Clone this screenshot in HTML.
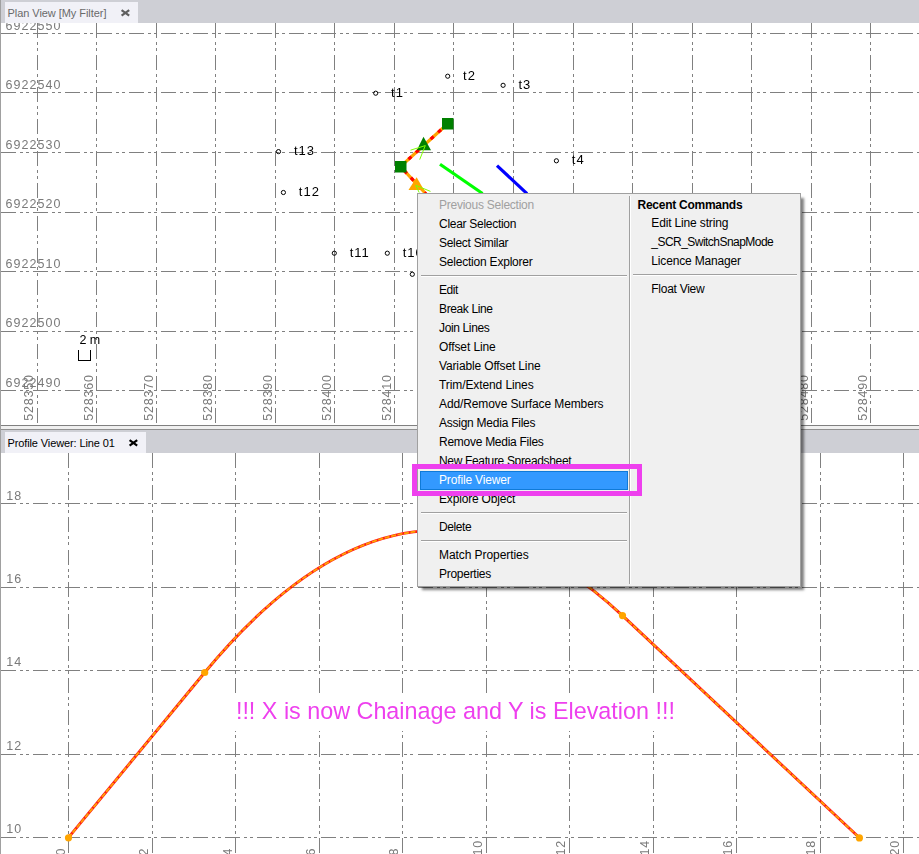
<!DOCTYPE html>
<html><head><meta charset="utf-8"><title>Profile Viewer</title>
<style>
html,body{margin:0;padding:0;background:#fff;}
body{width:919px;height:854px;overflow:hidden;position:relative;font-family:"Liberation Sans",sans-serif;}
.abs{position:absolute;}
.tabbar{position:absolute;left:0;width:919px;background:#cecfd5;}
.tab{position:absolute;left:5px;top:2px;height:21px;background:#f1f1f7;font-size:11px;line-height:21px;white-space:pre;}
.tab span.t{position:absolute;left:2.5px;top:0.5px;}
svg{position:absolute;left:0;top:0;}
svg text{font-family:"Liberation Sans",sans-serif;}
.menu{position:absolute;left:417px;top:193px;width:382px;height:392px;background:#f0f0f0;border:1px solid #a0a0a0;font-size:12px;color:#000;}
.mi{position:absolute;height:19px;line-height:19px;white-space:pre;margin-top:1px;}
.sep{position:absolute;height:1px;background:#a0a0a0;border-bottom:1px solid #fff;}
</style></head><body>
<svg width="919" height="854" viewBox="0 0 919 854" style="will-change:transform">
<defs><clipPath id="cp"><rect x="1" y="23" width="918" height="402"/></clipPath><clipPath id="cv"><rect x="1" y="453" width="918" height="401"/></clipPath></defs>
<g clip-path="url(#cp)">
<g stroke="#808080" stroke-width="1" stroke-dasharray="15 4 3 3 3 4.04" fill="none" shape-rendering="crispEdges">
<path d="M37.5 23V425" stroke-dasharray="15 4 3 3 3 4.09"/>
<path d="M96.5 23V425" stroke-dasharray="15 4 3 3 3 4.09"/>
<path d="M156.5 23V425" stroke-dasharray="15 4 3 3 3 4.09"/>
<path d="M215.5 23V425" stroke-dasharray="15 4 3 3 3 4.09"/>
<path d="M275.5 23V425" stroke-dasharray="15 4 3 3 3 4.09"/>
<path d="M334.5 23V425" stroke-dasharray="15 4 3 3 3 4.09"/>
<path d="M394.5 23V425" stroke-dasharray="15 4 3 3 3 4.09"/>
<path d="M453.5 23V425" stroke-dasharray="15 4 3 3 3 4.09"/>
<path d="M513.5 23V425" stroke-dasharray="15 4 3 3 3 4.09"/>
<path d="M573.5 23V425" stroke-dasharray="15 4 3 3 3 4.09"/>
<path d="M632.5 23V425" stroke-dasharray="15 4 3 3 3 4.09"/>
<path d="M692.5 23V425" stroke-dasharray="15 4 3 3 3 4.09"/>
<path d="M751.5 23V425" stroke-dasharray="15 4 3 3 3 4.09"/>
<path d="M811.5 23V425" stroke-dasharray="15 4 3 3 3 4.09"/>
<path d="M870.5 23V425" stroke-dasharray="15 4 3 3 3 4.09"/>
<path d="M1 33.5H919"/>
<path d="M1 92.5H919"/>
<path d="M1 152.5H919"/>
<path d="M1 212.5H919"/>
<path d="M1 271.5H919"/>
<path d="M1 331.5H919"/>
<path d="M1 390.5H919"/>
</g>
<text x="5.6" y="29.6" font-size="12.5" letter-spacing="1.02" fill="#7a7a7a">6922550</text>
<text x="5.6" y="89.2" font-size="12.5" letter-spacing="1.02" fill="#7a7a7a">6922540</text>
<text x="5.6" y="148.7" font-size="12.5" letter-spacing="1.02" fill="#7a7a7a">6922530</text>
<text x="5.6" y="208.2" font-size="12.5" letter-spacing="1.02" fill="#7a7a7a">6922520</text>
<text x="5.6" y="267.8" font-size="12.5" letter-spacing="1.02" fill="#7a7a7a">6922510</text>
<text x="5.6" y="327.4" font-size="12.5" letter-spacing="1.02" fill="#7a7a7a">6922500</text>
<text x="5.6" y="386.9" font-size="12.5" letter-spacing="1.02" fill="#7a7a7a">6922490</text>
<text transform="translate(33.4,420.8) rotate(-90)" font-size="12.5" letter-spacing="0.80" fill="#7a7a7a">528350</text>
<text transform="translate(92.9,420.8) rotate(-90)" font-size="12.5" letter-spacing="0.80" fill="#7a7a7a">528360</text>
<text transform="translate(152.5,420.8) rotate(-90)" font-size="12.5" letter-spacing="0.80" fill="#7a7a7a">528370</text>
<text transform="translate(212.0,420.8) rotate(-90)" font-size="12.5" letter-spacing="0.80" fill="#7a7a7a">528380</text>
<text transform="translate(271.6,420.8) rotate(-90)" font-size="12.5" letter-spacing="0.80" fill="#7a7a7a">528390</text>
<text transform="translate(331.1,420.8) rotate(-90)" font-size="12.5" letter-spacing="0.80" fill="#7a7a7a">528400</text>
<text transform="translate(390.7,420.8) rotate(-90)" font-size="12.5" letter-spacing="0.80" fill="#7a7a7a">528410</text>
<text transform="translate(450.2,420.8) rotate(-90)" font-size="12.5" letter-spacing="0.80" fill="#7a7a7a">528420</text>
<text transform="translate(509.8,420.8) rotate(-90)" font-size="12.5" letter-spacing="0.80" fill="#7a7a7a">528430</text>
<text transform="translate(569.3,420.8) rotate(-90)" font-size="12.5" letter-spacing="0.80" fill="#7a7a7a">528440</text>
<text transform="translate(628.9,420.8) rotate(-90)" font-size="12.5" letter-spacing="0.80" fill="#7a7a7a">528450</text>
<text transform="translate(688.4,420.8) rotate(-90)" font-size="12.5" letter-spacing="0.80" fill="#7a7a7a">528460</text>
<text transform="translate(748.0,420.8) rotate(-90)" font-size="12.5" letter-spacing="0.80" fill="#7a7a7a">528470</text>
<text transform="translate(807.5,420.8) rotate(-90)" font-size="12.5" letter-spacing="0.80" fill="#7a7a7a">528480</text>
<text transform="translate(867.1,420.8) rotate(-90)" font-size="12.5" letter-spacing="0.80" fill="#7a7a7a">528490</text>
<text x="79.6" y="344.2" font-size="12.5" letter-spacing="-0.12" fill="#000">2 m</text>
<path d="M78.5 350V360.5H90.5V350" stroke="#000" stroke-width="1" fill="none" shape-rendering="crispEdges"/>
<circle cx="447.7" cy="76.2" r="2.1" stroke="#000" stroke-width="1" fill="none"/>
<text x="463.1" y="79.7" font-size="13" letter-spacing="1" fill="#000">t2</text>
<circle cx="503.1" cy="85.3" r="2.1" stroke="#000" stroke-width="1" fill="none"/>
<text x="518.5" y="88.8" font-size="13" letter-spacing="1" fill="#000">t3</text>
<circle cx="375.7" cy="93.2" r="2.1" stroke="#000" stroke-width="1" fill="none"/>
<text x="391.1" y="96.7" font-size="13" letter-spacing="1" fill="#000">t1</text>
<circle cx="556.4" cy="160.8" r="2.1" stroke="#000" stroke-width="1" fill="none"/>
<text x="571.8" y="164.3" font-size="13" letter-spacing="1" fill="#000">t4</text>
<circle cx="278.5" cy="151.6" r="2.1" stroke="#000" stroke-width="1" fill="none"/>
<text x="293.9" y="155.1" font-size="13" letter-spacing="1" fill="#000">t13</text>
<circle cx="283.4" cy="192.5" r="2.1" stroke="#000" stroke-width="1" fill="none"/>
<text x="298.8" y="196.0" font-size="13" letter-spacing="1" fill="#000">t12</text>
<circle cx="334.3" cy="253.2" r="2.1" stroke="#000" stroke-width="1" fill="none"/>
<text x="349.7" y="256.7" font-size="13" letter-spacing="1" fill="#000">t11</text>
<circle cx="387.3" cy="253.2" r="2.1" stroke="#000" stroke-width="1" fill="none"/>
<text x="402.7" y="256.7" font-size="13" letter-spacing="1" fill="#000">t10</text>
<circle cx="412.3" cy="274.3" r="2.1" stroke="#000" stroke-width="1" fill="none"/>
<text x="427.7" y="277.8" font-size="13" letter-spacing="1" fill="#000">t9</text>
<g fill="none" stroke-linecap="butt">
<path d="M447.7 123.7L400.5 166.5L426 194" stroke="#ffa500" stroke-width="3.2"/>
<path d="M447.7 123.7L400.5 166.5L426 194" stroke="#ff0000" stroke-width="3.2" stroke-dasharray="4 6" stroke-dashoffset="-9"/>
<path d="M440 164.2L482.5 193.5" stroke="#00ff00" stroke-width="3.2"/>
<path d="M497 165.6L527 193.6" stroke="#0000ff" stroke-width="3.2"/>
</g>
<rect x="442" y="118" width="11.5" height="11.5" fill="#008000"/>
<rect x="395" y="161" width="11.5" height="11.5" fill="#008000"/>
<path d="M423.5 136.8L431 150.2H416.8Z" fill="#008000"/>
<path d="M416.6 177.3L424 190H408.5Z" fill="#ffa500"/>
<path d="M410.5 150.2L425.3 145.6L419.7 159.6" stroke="#7fff00" stroke-width="1" fill="none"/>
<path d="M419.2 192.5L415.7 185.3L430.5 191.4" stroke="#7fff00" stroke-width="1" fill="none"/>
</g>
<g clip-path="url(#cv)">
<g stroke="#808080" stroke-width="1" stroke-dasharray="15 4 3 3 3 4.04" fill="none" shape-rendering="crispEdges">
<path d="M68.5 453.3V860" stroke-dasharray="15 4 3 3 3 4.07"/>
<path d="M152.5 453.3V860" stroke-dasharray="15 4 3 3 3 4.07"/>
<path d="M235.5 453.3V860" stroke-dasharray="15 4 3 3 3 4.07"/>
<path d="M319.5 453.3V860" stroke-dasharray="15 4 3 3 3 4.07"/>
<path d="M402.5 453.3V860" stroke-dasharray="15 4 3 3 3 4.07"/>
<path d="M486.5 453.3V860" stroke-dasharray="15 4 3 3 3 4.07"/>
<path d="M569.5 453.3V860" stroke-dasharray="15 4 3 3 3 4.07"/>
<path d="M653.5 453.3V860" stroke-dasharray="15 4 3 3 3 4.07"/>
<path d="M736.5 453.3V860" stroke-dasharray="15 4 3 3 3 4.07"/>
<path d="M820.5 453.3V860" stroke-dasharray="15 4 3 3 3 4.07"/>
<path d="M903.5 453.3V860" stroke-dasharray="15 4 3 3 3 4.07"/>
<path d="M1 503.5H919"/>
<path d="M1 587.5H919"/>
<path d="M1 670.5H919"/>
<path d="M1 754.5H919"/>
<path d="M1 837.5H919"/>
</g>
<text x="6.3" y="499.6" font-size="12.5" letter-spacing="1.02" fill="#7a7a7a">18</text>
<text x="6.3" y="582.9" font-size="12.5" letter-spacing="1.02" fill="#7a7a7a">16</text>
<text x="6.3" y="666.2" font-size="12.5" letter-spacing="1.02" fill="#7a7a7a">14</text>
<text x="6.3" y="749.5" font-size="12.5" letter-spacing="1.02" fill="#7a7a7a">12</text>
<text x="6.3" y="832.8" font-size="12.5" letter-spacing="1.02" fill="#7a7a7a">10</text>
<text transform="translate(64.8,855.5) rotate(-90)" font-size="12.5" letter-spacing="0.80" fill="#7a7a7a">0</text>
<text transform="translate(148.2,855.5) rotate(-90)" font-size="12.5" letter-spacing="0.80" fill="#7a7a7a">2</text>
<text transform="translate(231.6,855.5) rotate(-90)" font-size="12.5" letter-spacing="0.80" fill="#7a7a7a">4</text>
<text transform="translate(315.0,855.5) rotate(-90)" font-size="12.5" letter-spacing="0.80" fill="#7a7a7a">6</text>
<text transform="translate(398.4,855.5) rotate(-90)" font-size="12.5" letter-spacing="0.80" fill="#7a7a7a">8</text>
<text transform="translate(481.8,855.5) rotate(-90)" font-size="12.5" letter-spacing="0.80" fill="#7a7a7a">10</text>
<text transform="translate(565.2,855.5) rotate(-90)" font-size="12.5" letter-spacing="0.80" fill="#7a7a7a">12</text>
<text transform="translate(648.6,855.5) rotate(-90)" font-size="12.5" letter-spacing="0.80" fill="#7a7a7a">14</text>
<text transform="translate(732.0,855.5) rotate(-90)" font-size="12.5" letter-spacing="0.80" fill="#7a7a7a">16</text>
<text transform="translate(815.4,855.5) rotate(-90)" font-size="12.5" letter-spacing="0.80" fill="#7a7a7a">18</text>
<text transform="translate(898.8,855.5) rotate(-90)" font-size="12.5" letter-spacing="0.80" fill="#7a7a7a">20</text>
<path d="M68.4 837.7L204.7 672.5C343.97 504.0 483.23 485.0 622.5 615.6L859.4 837.8" stroke="#ff0000" stroke-width="2.9" stroke-opacity="0.9" fill="none"/>
<path d="M68.4 837.7L204.7 672.5C343.97 504.0 483.23 485.0 622.5 615.6L859.4 837.8" stroke="#ffa500" stroke-width="1.7" stroke-dasharray="5 1.6" fill="none"/>
<circle cx="68.5" cy="837.8" r="3.6" fill="#ffa500"/>
<circle cx="204.7" cy="672.5" r="3.6" fill="#ffa500"/>
<circle cx="622.5" cy="615.6" r="3.6" fill="#ffa500"/>
<circle cx="859.4" cy="837.9" r="3.6" fill="#ffa500"/>
<rect x="232" y="693.5" width="449" height="37.5" fill="#fff"/>
<text x="235.9" y="719.1" font-size="24.5" textLength="439" lengthAdjust="spacingAndGlyphs" fill="#ee40ee">!!! X is now Chainage and Y is Elevation !!!</text>
</g>
<rect x="0" y="0" width="1" height="854" fill="#a0a0a0"/>
<rect x="1" y="425" width="918" height="1" fill="#808080"/>
<rect x="1" y="426" width="918" height="3" fill="#f0f0f0"/>
<rect x="1" y="429" width="918" height="1" fill="#909090"/>
</svg>
<div class="tabbar" style="top:0;height:23px;left:1px"><div class="tab" style="left:4px;width:133px;color:#6a6a6a"><span class="t" style="letter-spacing:-0.053px">Plan View [My Filter]</span></div><svg class="abs" style="left:119px;top:8.5px" width="11" height="9" viewBox="0 0 11 9"><path d="M1.6 1.2L9.2 6.6M9.2 1.2L1.6 6.6" stroke="#5f5f5f" stroke-width="2.2" fill="none"/></svg></div>
<div class="tabbar" style="top:430px;height:23px;left:1px"><div class="tab" style="left:4px;width:141px;color:#000"><span class="t" style="letter-spacing:-0.117px">Profile Viewer: Line 01</span></div><svg class="abs" style="left:126.8px;top:8.5px" width="11" height="9" viewBox="0 0 11 9"><path d="M1.6 1.2L9.2 6.6M9.2 1.2L1.6 6.6" stroke="#000" stroke-width="2.2" fill="none"/></svg></div>
<div class="abs" style="left:417px;top:193px;width:384px;height:394px;box-shadow:4px 4px 2.5px -1px rgba(0,0,0,0.5)"></div>
<div class="menu">
<div class="abs" style="left:2px;top:277px;width:206px;height:17px;background:#3399ff;border:1px solid #0f7ad8"></div>
<div class="mi" style="left:21px;top:1px;color:#a0a0a0;letter-spacing:-0.247px">Previous Selection</div>
<div class="mi" style="left:21px;top:20px;color:#000;letter-spacing:-0.284px">Clear Selection</div>
<div class="mi" style="left:21px;top:39px;color:#000;letter-spacing:-0.289px">Select Similar</div>
<div class="mi" style="left:21px;top:58px;color:#000;letter-spacing:-0.211px">Selection Explorer</div>
<div class="sep" style="left:3px;top:81px;width:206px"></div>
<div class="mi" style="left:21px;top:86px;color:#000;letter-spacing:-0.462px">Edit</div>
<div class="mi" style="left:21px;top:105px;color:#000;letter-spacing:-0.375px">Break Line</div>
<div class="mi" style="left:21px;top:124px;color:#000;letter-spacing:-0.361px">Join Lines</div>
<div class="mi" style="left:21px;top:143px;color:#000;letter-spacing:-0.103px">Offset Line</div>
<div class="mi" style="left:21px;top:162px;color:#000;letter-spacing:-0.142px">Variable Offset Line</div>
<div class="mi" style="left:21px;top:181px;color:#000;letter-spacing:-0.098px">Trim/Extend Lines</div>
<div class="mi" style="left:21px;top:200px;color:#000;letter-spacing:-0.112px">Add/Remove Surface Members</div>
<div class="mi" style="left:21px;top:219px;color:#000;letter-spacing:-0.248px">Assign Media Files</div>
<div class="mi" style="left:21px;top:238px;color:#000;letter-spacing:-0.269px">Remove Media Files</div>
<div class="mi" style="left:21px;top:257px;color:#000;letter-spacing:-0.341px">New Feature Spreadsheet</div>
<div class="mi" style="left:21px;top:276px;color:#fff;letter-spacing:-0.155px">Profile Viewer</div>
<div class="mi" style="left:21px;top:295px;color:#000;letter-spacing:-0.177px">Explore Object</div>
<div class="sep" style="left:3px;top:318px;width:206px"></div>
<div class="mi" style="left:21px;top:323px;color:#000;letter-spacing:-0.417px">Delete</div>
<div class="sep" style="left:3px;top:346px;width:206px"></div>
<div class="mi" style="left:21px;top:351px;color:#000;letter-spacing:-0.067px">Match Properties</div>
<div class="mi" style="left:21px;top:370px;color:#000;letter-spacing:-0.278px">Properties</div>
<div class="abs" style="left:211px;top:2px;width:1px;height:388px;background:#a0a0a0;border-right:1px solid #fff"></div>
<div class="mi" style="left:219.5px;top:1px;font-weight:700;letter-spacing:-0.257px">Recent Commands</div>
<div class="mi" style="left:233.29999999999995px;top:19px;font-weight:400;letter-spacing:-0.153px">Edit Line string</div>
<div class="mi" style="left:233.29999999999995px;top:38px;font-weight:400;letter-spacing:-0.532px">_SCR_SwitchSnapMode</div>
<div class="mi" style="left:233.29999999999995px;top:57px;font-weight:400;letter-spacing:-0.169px">Licence Manager</div>
<div class="sep" style="left:215px;top:80px;width:164px"></div>
<div class="mi" style="left:233.29999999999995px;top:85px;font-weight:400;letter-spacing:-0.268px">Float View</div>
</div>
<div class="abs" style="left:412px;top:464px;width:220px;height:22px;border:5px solid #ee40ee;box-sizing:content-box"></div>
</body></html>
